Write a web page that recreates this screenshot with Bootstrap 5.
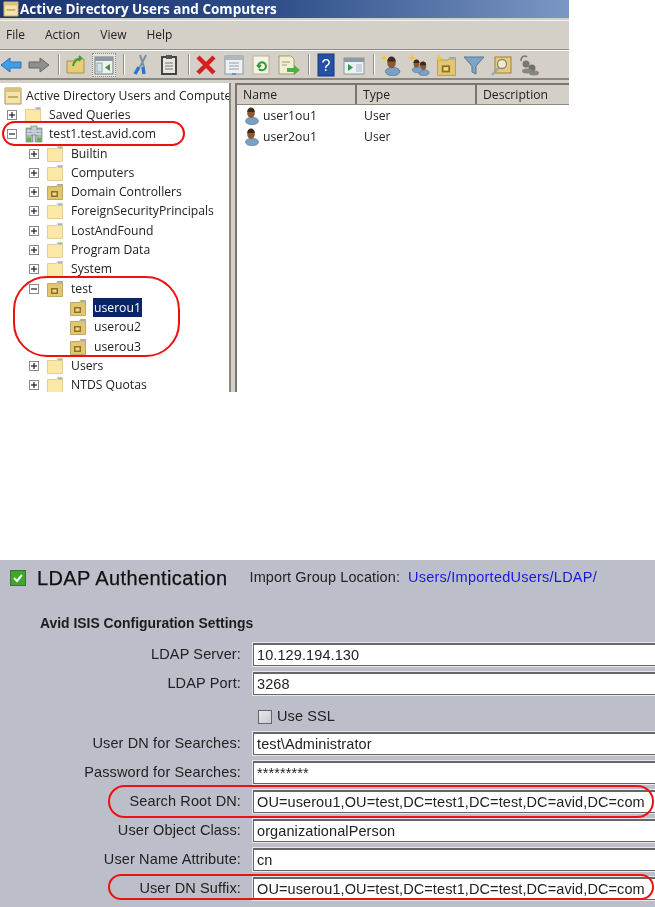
<!DOCTYPE html>
<html lang="en"><head><meta charset="utf-8"><title>AD and LDAP</title>
<link href="https://cdn.jsdelivr.net/npm/bootstrap@5.3.0/dist/css/bootstrap.min.css" rel="stylesheet">
<style>
html,body{margin:0;background:#fff;}
body{width:655px;height:907px;overflow:hidden;position:relative;font-family:"Open Sans","Liberation Sans",sans-serif;color:#222;}
.shot{width:569px;height:392px;background:#d4d0c8;overflow:hidden;filter:blur(.35px);}
.titlebar{height:18px;background:linear-gradient(90deg,#1c3570 0%,#2b4a86 45%,#7b97c4 100%);color:#fff;font-weight:700;font-size:13.5px;line-height:17px;padding-left:3px;gap:1px;}
.menurow{height:30px;margin-top:2px;border-top:1px solid #f4f2ee;border-bottom:1px solid #8f8d86;font-size:12px;padding-left:6px;gap:20px;}
.toolrow{height:30px;border-top:1px solid #fff;border-bottom:2px solid #8a8880;margin-left:-1px;}
.tsep{width:1px;height:21px;background:#908e88;box-shadow:1px 0 #fff;margin:0 5px 0 4px;flex:none;}
.tbtn{width:24px;height:24px;margin-right:3.5px;flex:none;}
.tbtn.on{background:#e6e3dc;outline:1px dotted #888;outline-offset:-1px;}
.panes{height:309px;margin-top:3px;}
.treepane{width:229px;background:#fff;overflow:hidden;font-size:12.2px;padding-top:3px;flex:none;}
.divider{width:7px;background:#d4d0c8;border-left:2px solid #8a8880;border-right:1px solid #77756e;flex:none;}
.listpane{flex:1;background:#fff;font-size:12.2px;border-left:1px solid #77756e;}
.thead{height:22px;background:#d4d0c8;border-top:2px solid #77756e;border-bottom:1px solid #8a8880;margin-bottom:1px;}
.thcell{border-right:2px solid #77756e;padding-left:6px;line-height:20px;}
.listline{height:20.5px;padding-left:6px;}
.listline span{white-space:nowrap;}
.tline{height:19.3px;white-space:nowrap;}
.tline svg{flex:none;}
.exp{width:10px;height:10px;border:1px solid #8a8a8a;flex:none;position:relative;background:#fff;}
.exp::before{content:"";position:absolute;left:1px;right:1px;top:3px;height:2px;background:#222;transform:scaleY(.6);}
.exp.plus::after{content:"";position:absolute;top:1px;bottom:1px;left:3px;width:2px;background:#222;transform:scaleX(.6);}
.lv0{padding-left:7px;}.lv1{padding-left:29px;}.lv2{padding-left:70px;}
.exp+svg{margin-left:8px;}
.tlabel{margin-left:6px;padding:0 2px;line-height:18px;}
.tlabel.near{margin-left:4px;}
.tlabel.sel{background:#0a246a;color:#fff;margin-left:7px;padding:0 1px;line-height:19px;}
.ldap{position:absolute;left:0;top:560px;width:655px;height:347px;background:#bcbfc9;overflow:hidden;font-family:"Liberation Sans",sans-serif;color:#222;filter:blur(.3px);padding-top:8px;}
.ldaphead{padding-left:10px;height:20px;}
.ldaptitle{font-size:20px;color:#111;margin-left:11px;margin-right:22px;letter-spacing:.39px;-webkit-text-stroke:.25px #111;white-space:nowrap;line-height:18px;}
.ldapmeta{font-size:14.5px;letter-spacing:.1px;white-space:nowrap;}
.ldaplink{color:#1818e0;margin-left:8px;letter-spacing:.24px;}
.ldapsub{font-size:13.9px;font-weight:700;margin:27px 0 12px 40px;line-height:16px;color:#1c1c1c;}
.frow{height:29px;}
.flabel{width:241px;text-align:right;font-size:14.5px;letter-spacing:.13px;flex:none;white-space:nowrap;margin-right:12px;line-height:23px;}
.fbox.form-control{width:402px;height:23px;flex:none;border-radius:0;border:1px solid #666;border-right:0;border-top:2px solid #666;box-shadow:0 0 0 1px #e6e8ee;padding:0 0 0 3px;font-size:14.5px;letter-spacing:.1px;line-height:20px;color:#222;white-space:nowrap;background:#fff;}
.sslrow{height:31px;padding-left:258px;font-size:14.5px;letter-spacing:.1px;}
.sslbox{width:14px;height:14px;border:1px solid #666;background:linear-gradient(135deg,#e8e8ee,#c8cad2);margin-right:5px;flex:none;}
.ring{position:absolute;border:2.3px solid #ee1111;background:transparent;pointer-events:none;}
.r1{left:2px;top:121px;width:183px;height:25px;border-radius:13px;}
.r2{left:13px;top:276px;width:167px;height:81px;border-radius:34px;}
.r3{left:108px;top:785px;width:546px;height:33px;border-radius:17px;}
.r4{left:108px;top:874px;width:546px;height:26px;border-radius:13px;}
</style></head><body>
<svg width="0" height="0" class="d-block position-absolute">
<defs>
<symbol id="fold" viewBox="0 0 16 16"><path d="M.5 2.500h9l1-2h5v15H.500z" fill="#fbe7a6" stroke="#dcc585" stroke-width=".8"/><rect x="11" y=".8" width="4" height="1.800" fill="#8fb7d8"/></symbol>
<symbol id="ou" viewBox="0 0 16 16"><path d="M.5 2.500h9l1-2h5v15H.500z" fill="#e4c671" stroke="#b49a52" stroke-width=".8"/><rect x="11" y=".8" width="4" height="1.800" fill="#8fb7d8"/><rect x="4" y="7" width="7" height="6" fill="#8f7126"/><rect x="5.500" y="8.500" width="4" height="3" fill="#ecd98c"/></symbol>
<symbol id="adroot" viewBox="0 0 18 18"><path d="M1 1h16v16H1z" fill="#f3e4ab" stroke="#a89358"/><rect x="1" y="1" width="16" height="4" fill="#d8c27c"/><rect x="4" y="9" width="10" height="2" fill="#c4ad68"/></symbol>
<symbol id="domain" viewBox="0 0 18 18"><rect x="1" y="3" width="7" height="14" fill="#a9b2b6" stroke="#69767c" stroke-width=".6"/><rect x="10" y="3" width="7" height="14" fill="#a9b2b6" stroke="#69767c" stroke-width=".6"/><rect x="6" y="1" width="6" height="9" fill="#c6cdd0" stroke="#69767c" stroke-width=".6"/><path d="M2 6h5M2 9h5M11 6h5M11 9h5" stroke="#eef1f2"/><rect x="2" y="13" width="4" height="4" fill="#5cb548"/><rect x="12" y="13" width="4" height="4" fill="#5cb548"/></symbol>
<symbol id="user" viewBox="0 0 16 18"><ellipse cx="9" cy="14" rx="6.500" ry="3.800" fill="#7aa0c8" stroke="#4c6e96" stroke-width=".6"/><ellipse cx="8" cy="6" rx="3.800" ry="5" fill="#8a5a34"/><path d="M4.200 5a3.800 4.500 0 0 1 7.600 0z" fill="#3b2a1c"/></symbol>
</defs></svg>

<div class="shot">
  <div class="titlebar d-flex align-items-center">
    <svg width="16" height="16"><use href="#adroot"/></svg><span>Active Directory Users and Computers</span>
  </div>
  <div class="menurow d-flex align-items-center">
    <span>File</span><span>Action</span><span>View</span><span>Help</span>
  </div>
  <div class="toolrow d-flex align-items-center">
    <svg class="tbtn" viewBox="0 0 24 24"><path d="M2 12l9-7v4h11v6H11v4z" fill="#3f9ee8" stroke="#2a70b8"/></svg>
    <svg class="tbtn" viewBox="0 0 24 24"><path d="M22 12l-9-7v4H2v6h11v4z" fill="#8f8f8c" stroke="#666"/></svg>
    <div class="tsep"></div>
    <svg class="tbtn" viewBox="0 0 24 24"><path d="M3 8h7l1-2h9v14H3z" fill="#e8cd78" stroke="#a8904c"/><path d="M9 13c1-5 4-7 8-8l-2-2m2 2l-2 3" fill="none" stroke="#39a035" stroke-width="2"/></svg>
    <svg class="tbtn on" viewBox="0 0 24 24"><rect x="3" y="4" width="18" height="17" fill="#f1f1ef" stroke="#6f7a80"/><rect x="3" y="4" width="18" height="4" fill="#8d9aa3"/><rect x="5" y="10" width="5" height="9" fill="#d7e2e9" stroke="#8aa"/><path d="M18 11v7l-5-3.500z" fill="#2f9b46"/></svg>
    <div class="tsep"></div>
    <svg class="tbtn" viewBox="0 0 24 24"><path d="M17 2l-6 12M11 2l4 12" stroke="#7d8f9e" stroke-width="2"/><path d="M10 14l-4 7M14 14l1 7" stroke="#2a75cc" stroke-width="3.400"/></svg>
    <svg class="tbtn" viewBox="0 0 24 24"><rect x="5" y="4" width="14" height="17" fill="#e8e6df" stroke="#333" stroke-width="1.800"/><rect x="9" y="2" width="6" height="4" fill="#555"/><path d="M8 10h8M8 13h8M8 16h8" stroke="#777"/></svg>
    <div class="tsep"></div>
    <svg class="tbtn" viewBox="0 0 24 24"><path d="M4 4l16 16M20 4L4 20" stroke="#d61f1f" stroke-width="4.500"/></svg>
    <svg class="tbtn" viewBox="0 0 24 24"><rect x="3" y="3" width="18" height="18" fill="#eef1f3" stroke="#8c959b"/><rect x="3" y="3" width="18" height="4" fill="#aeb8be"/><path d="M7 10h10M7 13h10M7 16h10" stroke="#99a"/><rect x="10" y="20" width="4" height="2" fill="#45a0e0"/></svg>
    <svg class="tbtn" viewBox="0 0 24 24"><rect x="4" y="3" width="16" height="18" fill="#f5f3e8" stroke="#b6b29a"/><path d="M9 13a4 4 0 1 1 1 3m-2-4l2 2 2-2" fill="none" stroke="#2e9a38" stroke-width="2"/></svg>
    <svg class="tbtn" viewBox="0 0 24 24"><path d="M2 3h12l3 3v15H2z" fill="#f4efd2" stroke="#a69b6e"/><path d="M5 9h8M5 12h5" stroke="#998"/><path d="M10 15h7v-3l6 5-6 5v-3h-7z" fill="#4db043"/></svg>
    <div class="tsep"></div>
    <svg class="tbtn" viewBox="0 0 24 24"><rect x="4" y="1" width="16" height="22" fill="#2550a8" stroke="#163478"/><text x="12" y="18" font-size="16" font-family="Liberation Sans" fill="#fff" text-anchor="middle">?</text></svg>
    <svg class="tbtn" viewBox="0 0 24 24"><rect x="2" y="5" width="20" height="16" fill="#eef1f3" stroke="#8c959b"/><rect x="2" y="5" width="20" height="4" fill="#8d9aa3"/><path d="M6 11v7l5-3.500z" fill="#2f9b46"/><rect x="14" y="11" width="6" height="8" fill="#cbd6dc"/></svg>
    <div class="tsep"></div>
    <svg class="tbtn" viewBox="0 0 24 24"><use href="#user" x="3" y="3" width="19" height="20"/><path d="M5 1l1 3 3 1-3 1-1 3-1-3-3-1 3-1z" fill="#f2c72e"/></svg>
    <svg class="tbtn" viewBox="0 0 24 24"><use href="#user" x="9" y="8" width="14" height="15"/><use href="#user" x="3" y="6" width="13" height="14"/><path d="M5 1l1 3 3 1-3 1-1 3-1-3-3-1 3-1z" fill="#f2c72e"/></svg>
    <svg class="tbtn" viewBox="0 0 24 24"><use href="#ou" x="3" y="4" width="19" height="19"/><path d="M5 1l1 3 3 1-3 1-1 3-1-3-3-1 3-1z" fill="#f2c72e"/></svg>
    <svg class="tbtn" viewBox="0 0 24 24"><path d="M2 4h20l-8 9v8l-4-2v-6z" fill="#7ea6c4" stroke="#557a98"/></svg>
    <svg class="tbtn" viewBox="0 0 24 24"><rect x="6" y="4" width="16" height="16" fill="#e6cc7a" stroke="#9a8240"/><circle cx="13" cy="11" r="4.500" fill="#f4ecc8" stroke="#8a8a8a" stroke-width="1.400"/><path d="M9.500 15L3 22" stroke="#9aa" stroke-width="2.500"/></svg>
    <svg class="tbtn" viewBox="0 0 24 24"><circle cx="9" cy="11" r="3.500" fill="#77786f"/><circle cx="15" cy="15" r="3.500" fill="#6f706a"/><ellipse cx="17" cy="20" rx="5" ry="2.500" fill="#86877f"/><ellipse cx="10" cy="18" rx="5" ry="2.500" fill="#86877f"/><path d="M4 8c0-5 4-6 6-4" fill="none" stroke="#777" stroke-width="1.500"/></svg>
  </div>
  <div class="panes d-flex">
    <div class="treepane">
      <div class="tline d-flex align-items-center ps-1"><svg width="18" height="18"><use href="#adroot"/></svg><span class="ms-1">Active Directory Users and Computers</span></div>
      <div class="tline lv0 d-flex align-items-center"><span class="exp plus"></span><svg width="16" height="16"><use href="#fold"/></svg><span class="tlabel">Saved Queries</span></div>
      <div class="tline lv0 d-flex align-items-center"><span class="exp"></span><svg width="18" height="18"><use href="#domain"/></svg><span class="tlabel near">test1.test.avid.com</span></div>
      <div class="tline lv1 d-flex align-items-center"><span class="exp plus"></span><svg width="16" height="16"><use href="#fold"/></svg><span class="tlabel">Builtin</span></div>
      <div class="tline lv1 d-flex align-items-center"><span class="exp plus"></span><svg width="16" height="16"><use href="#fold"/></svg><span class="tlabel">Computers</span></div>
      <div class="tline lv1 d-flex align-items-center"><span class="exp plus"></span><svg width="16" height="16"><use href="#ou"/></svg><span class="tlabel">Domain Controllers</span></div>
      <div class="tline lv1 d-flex align-items-center"><span class="exp plus"></span><svg width="16" height="16"><use href="#fold"/></svg><span class="tlabel">ForeignSecurityPrincipals</span></div>
      <div class="tline lv1 d-flex align-items-center"><span class="exp plus"></span><svg width="16" height="16"><use href="#fold"/></svg><span class="tlabel">LostAndFound</span></div>
      <div class="tline lv1 d-flex align-items-center"><span class="exp plus"></span><svg width="16" height="16"><use href="#fold"/></svg><span class="tlabel">Program Data</span></div>
      <div class="tline lv1 d-flex align-items-center"><span class="exp plus"></span><svg width="16" height="16"><use href="#fold"/></svg><span class="tlabel">System</span></div>
      <div class="tline lv1 d-flex align-items-center"><span class="exp"></span><svg width="16" height="16"><use href="#ou"/></svg><span class="tlabel">test</span></div>
      <div class="tline lv2 d-flex align-items-center"><svg width="16" height="16"><use href="#ou"/></svg><span class="tlabel sel">userou1</span></div>
      <div class="tline lv2 d-flex align-items-center"><svg width="16" height="16"><use href="#ou"/></svg><span class="tlabel">userou2</span></div>
      <div class="tline lv2 d-flex align-items-center"><svg width="16" height="16"><use href="#ou"/></svg><span class="tlabel">userou3</span></div>
      <div class="tline lv1 d-flex align-items-center"><span class="exp plus"></span><svg width="16" height="16"><use href="#fold"/></svg><span class="tlabel">Users</span></div>
      <div class="tline lv1 d-flex align-items-center"><span class="exp plus"></span><svg width="16" height="16"><use href="#fold"/></svg><span class="tlabel">NTDS Quotas</span></div>
    </div>
    <div class="divider"></div>
    <div class="listpane">
      <div class="thead d-flex">
        <div class="thcell" style="width:120px">Name</div>
        <div class="thcell" style="width:120px">Type</div>
        <div class="thcell flex-grow-1 border-0">Description</div>
      </div>
      <div class="listline d-flex align-items-center"><svg width="16" height="18" class="me-1"><use href="#user"/></svg><span style="width:101px">user1ou1</span><span>User</span></div>
      <div class="listline d-flex align-items-center"><svg width="16" height="18" class="me-1"><use href="#user"/></svg><span style="width:101px">user2ou1</span><span>User</span></div>
    </div>
  </div>
</div>

<div class="ldap">
  <div class="ldaphead d-flex align-items-center">
    <svg width="16" height="16" viewBox="0 0 16 16"><rect x=".5" y=".5" width="15" height="15" fill="#3ca82a" stroke="#4a6a44"/><path d="M4 8l3 3 5-6" fill="none" stroke="#fff" stroke-width="2"/></svg>
    <span class="ldaptitle">LDAP Authentication</span>
    <span class="ldapmeta">Import Group Location:<span class="ldaplink">Users/ImportedUsers/LDAP/</span></span>
  </div>
  <div class="ldapsub">Avid ISIS Configuration Settings</div>
  <div class="frow d-flex"><div class="flabel">LDAP Server:</div><div class="fbox form-control">10.129.194.130</div></div>
  <div class="frow d-flex"><div class="flabel">LDAP Port:</div><div class="fbox form-control">3268</div></div>
  <div class="sslrow d-flex align-items-center"><span class="sslbox"></span><span>Use SSL</span></div>
  <div class="frow d-flex"><div class="flabel">User DN for Searches:</div><div class="fbox form-control">test\Administrator</div></div>
  <div class="frow d-flex"><div class="flabel">Password for Searches:</div><div class="fbox form-control">*********</div></div>
  <div class="frow d-flex"><div class="flabel">Search Root DN:</div><div class="fbox form-control">OU=userou1,OU=test,DC=test1,DC=test,DC=avid,DC=com</div></div>
  <div class="frow d-flex"><div class="flabel">User Object Class:</div><div class="fbox form-control">organizationalPerson</div></div>
  <div class="frow d-flex"><div class="flabel">User Name Attribute:</div><div class="fbox form-control">cn</div></div>
  <div class="frow d-flex"><div class="flabel">User DN Suffix:</div><div class="fbox form-control">OU=userou1,OU=test,DC=test1,DC=test,DC=avid,DC=com</div></div>
</div>

<div class="ring r1"></div>
<div class="ring r2"></div>
<div class="ring r3"></div>
<div class="ring r4"></div>
</body></html>
